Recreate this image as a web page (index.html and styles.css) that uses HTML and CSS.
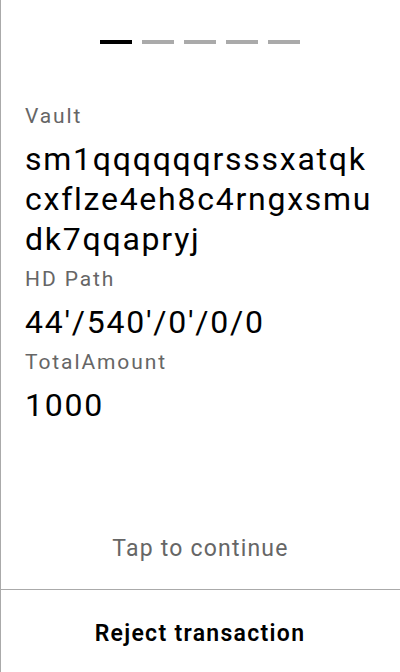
FILE: index.html
```
<!DOCTYPE html>
<html>
<head>
<meta charset="utf-8">
<link rel="stylesheet" href="styles.css">
</head>
<body>
<div class="screen">
  <div class="main">
    <div class="steps">
      <span class="step active"></span>
      <span class="step"></span>
      <span class="step"></span>
      <span class="step"></span>
      <span class="step"></span>
    </div>
    <div class="fields">
      <div class="field">
        <div class="label">Vault</div>
        <div class="value">sm1qqqqqqrsssxatqk<br>cxflze4eh8c4rngxsmu<br>dk7qqapryj</div>
      </div>
      <div class="field">
        <div class="label">HD Path</div>
        <div class="value">44'/540'/0'/0/0</div>
      </div>
      <div class="field">
        <div class="label">TotalAmount</div>
        <div class="value">1000</div>
      </div>
    </div>
    <div class="tap">Tap to continue</div>
  </div>
  <div class="footer">Reject transaction</div>
</div>
</body>
</html>
```
FILE: styles.css
```
html, body {
  margin: 0;
  padding: 0;
  background: #fff;
}
.screen {
  width: 400px;
  height: 672px;
  box-sizing: border-box;
  border-left: 1px solid #aaaaaa;
  display: flex;
  flex-direction: column;
  font-family: Roboto, Inter, sans-serif;
}
.main {
  flex: 1;
  display: flex;
  flex-direction: column;
}
.steps {
  display: flex;
  justify-content: center;
  gap: 10px;
  padding-top: 40px;
  margin-left: -1px;
}
.step {
  width: 32px;
  height: 4px;
  background: #aaaaaa;
}
.step.active {
  background: #000;
}
.fields {
  padding: 58px 24px 0 24px;
  display: flex;
  flex-direction: column;
  gap: 6px;
}
.label {
  font-size: 21px;
  line-height: 28px;
  letter-spacing: 1.9px;
  color: #666;
  margin-bottom: 9px;
}
.value {
  font-size: 32px;
  line-height: 40px;
  letter-spacing: 1.75px;
  color: #000;
  white-space: nowrap;
}
.tap {
  margin-top: auto;
  text-align: center;
  font-size: 23px;
  line-height: 28px;
  letter-spacing: 1.2px;
  color: #666;
  padding-bottom: 26px;
}
.footer {
  height: 83px;
  box-sizing: border-box;
  padding-top: 6px;
  border-top: 1px solid #aaaaaa;
  margin-left: -1px;
  display: flex;
  align-items: center;
  justify-content: center;
  font-size: 23px;
  line-height: 28px;
  letter-spacing: 1.3px;
  font-weight: 600;
  color: #000;
}
```
